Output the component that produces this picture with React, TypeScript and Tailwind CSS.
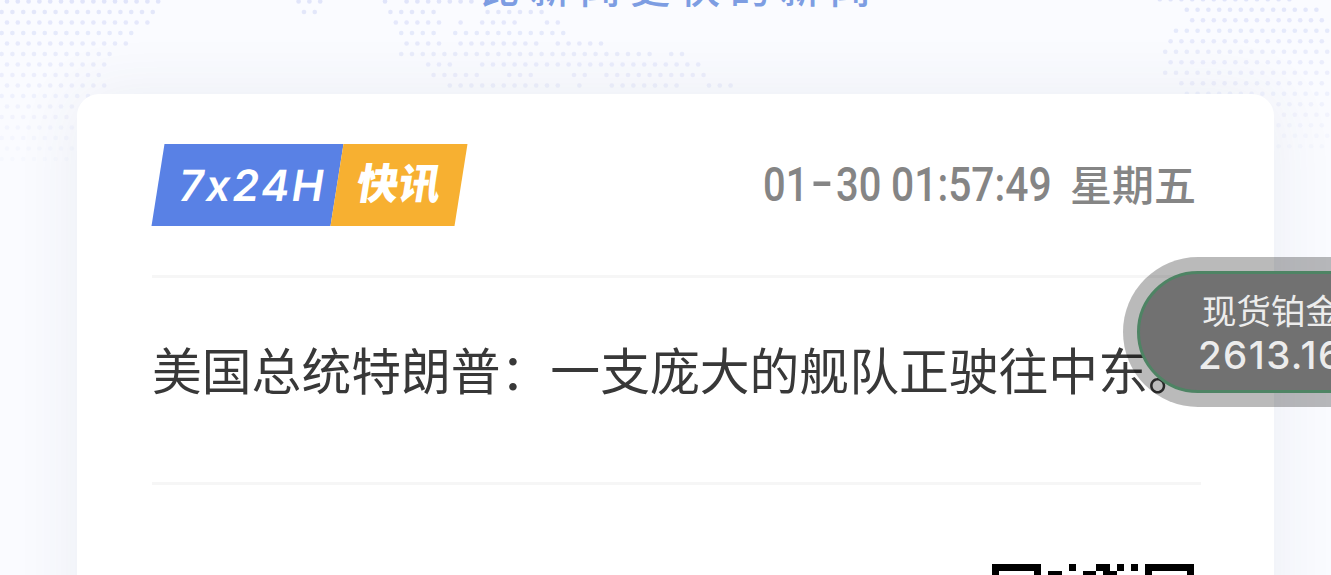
type DotRun = [row: number, from: number, to: number];

const STEP_X = 10.8;
const STEP_Y = 10.5;

// Runs of dots per row, in px
const LEFT_DOTS: DotRun[] = [
  [0, 0, 162], [1, 0, 157], [2, 0, 150], [3, 0, 135], [4, 0, 128], [5, 0, 113],
  [6, 0, 109], [7, 0, 104], [8, 0, 108], [9, 0, 92], [10, 0, 77], [11, 0, 77],
  [12, 0, 77], [13, 0, 77], [14, 0, 77], [15, 0, 77],
  [0, 294, 324], [1, 300, 319],
  [0, 382, 390], [0, 403, 476], [1, 386, 438], [1, 482, 547],
  [2, 392, 444], [2, 456, 464], [2, 478, 519], [2, 543, 562],
  [3, 397, 437], [3, 451, 567], [4, 400, 444], [4, 456, 542], [4, 553, 606],
  [5, 397, 654], [5, 666, 686], [6, 424, 454], [6, 478, 704],
  [7, 429, 482], [7, 504, 536], [7, 568, 590], [7, 602, 708],
  [8, 446, 561], [8, 576, 584], [8, 606, 681], [8, 703, 734],
];

const RIGHT_DOTS: DotRun[] = [
  [0, 1156, 1294], [1, 1182, 1321], [2, 1188, 1331], [3, 1172, 1331],
  [4, 1166, 1331], [5, 1161, 1331], [6, 1166, 1331], [7, 1161, 1331],
  [8, 1177, 1331], [9, 1182, 1331], [10, 1274, 1331], [11, 1274, 1331],
  [12, 1274, 1331], [13, 1274, 1331], [14, 1274, 1331],
];

function buildDots(runs: DotRun[], originX: number, originY: number) {
  return runs.flatMap(([row, from, to]) => {
    const start = originX + (row % 2 ? STEP_X / 2 : 0);
    const dots: { x: number; y: number; opacity: number }[] = [];
    for (let i = Math.ceil((from - start) / STEP_X); start + i * STEP_X <= to; i++) {
      dots.push({
        x: start + i * STEP_X,
        y: originY + row * STEP_Y,
        opacity: Math.max(0.12, 1 - row * 0.06),
      });
    }
    return dots;
  });
}

const DOTS = [...buildDots(LEFT_DOTS, 7, 1.5), ...buildDots(RIGHT_DOTS, 1159.8, -0.7)];

const QR_SIZE = 29;
const QR_ROWS = [
  "11111110000100011010101111111",
  "10000010110001101100001000001",
];

function WorldDots() {
  return (
    <svg className="absolute inset-0 w-full h-full" viewBox="0 0 1331 575" aria-hidden>
      {DOTS.map((dot, i) => (
        <circle key={i} cx={dot.x} cy={dot.y} r="2.3" fill="#e1e5fa" opacity={dot.opacity} />
      ))}
    </svg>
  );
}

function Badge() {
  return (
    <div className="flex h-[82px] ml-[6px] -skew-x-[9deg] text-white">
      <div className="w-[179px] bg-[#5981e5] flex items-center justify-center">
        <span className="font-['Inter',sans-serif] text-[43px] leading-none font-semibold tracking-[2.2px] pt-[1px] pl-[11px] whitespace-nowrap">
          7x24H
        </span>
      </div>
      <div className="w-[124px] bg-[#f7b031] flex items-center justify-center">
        <span className="font-['Noto_Sans_CJK_SC',sans-serif] text-[42px] leading-none font-black pb-[9px] whitespace-nowrap">
          快讯
        </span>
      </div>
    </div>
  );
}

function Timestamp() {
  return (
    <div className="flex items-center h-[82px] text-[#858585] whitespace-nowrap">
      <span className="flex w-[128px] font-['Roboto',sans-serif] text-[48px] leading-none font-medium">
        <span className="w-[48px]">
          <span className="inline-block origin-left scale-x-[0.83]">01</span>
        </span>
        <span className="w-[25px] -mt-[3px]">
          <span className="inline-block origin-left scale-x-[1.35]">-</span>
        </span>
        <span>
          <span className="inline-block origin-left scale-x-[0.83]">30</span>
        </span>
      </span>
      <span className="w-[179px] font-['Roboto',sans-serif] text-[48px] leading-none font-medium">
        <span className="inline-block origin-left scale-x-[0.85]">01:57:49</span>
      </span>
      <span className="font-['Noto_Sans_CJK_SC',sans-serif] text-[42px] leading-none font-medium pb-[5px]">
        星期五
      </span>
    </div>
  );
}

function QrCode() {
  return (
    <svg className="w-[202px] h-[202px]" viewBox={`0 0 ${QR_SIZE} ${QR_SIZE}`} shapeRendering="crispEdges" aria-hidden>
      {QR_ROWS.flatMap((row, y) =>
        [...row].map((cell, x) => (cell === "1" ? <rect key={`${x}-${y}`} x={x} y={y} width="1" height="1" /> : null)),
      )}
    </svg>
  );
}

function PriceBubble() {
  return (
    <div className="absolute left-[1123px] top-[257px] w-[320px] h-[150px] rounded-full bg-black/27 p-[14px]">
      <div className="h-full rounded-full border-[3px] border-[#4e8464] bg-[#717171] pl-[58px] pt-[15px] text-[#ececec] whitespace-nowrap">
        <div className="font-['Noto_Sans_CJK_SC',sans-serif] text-[34.5px] leading-[41px] pl-[4px]">现货铂金</div>
        <div className="font-['Inter',sans-serif] text-[38.5px] leading-[50px] tracking-[1.4px] font-medium">2613.16</div>
      </div>
    </div>
  );
}

export default function App() {
  return (
    <div className="relative w-full h-[575px] overflow-hidden bg-[#fafbff]">
      <WorldDots />
      <div className="relative h-[94px]">
        <h1 className="-mt-[38px] pl-[29px] text-center font-['Noto_Sans_CJK_SC',sans-serif] text-[40px] leading-[48px] tracking-[10px] font-medium text-[#7d9de2] float-left w-full">
          比新闻更快的新闻
        </h1>
      </div>
      <main className="relative mx-[77px] w-[1197px] h-[700px] rounded-[22px] bg-white px-[75px] pt-[50px] shadow-[0_0_66px_rgba(60,66,90,0.075)]">
        <div className="flex justify-between w-[1044px]">
          <Badge />
          <Timestamp />
        </div>
        <div className="mt-[49px] h-[3px] w-[1049px] bg-[#f6f6f6]" />
        <p className="h-[204px] pt-[53px] font-['Noto_Sans_CJK_SC',sans-serif] text-[49.8px] leading-[74px] text-[#383838] whitespace-nowrap">
          美国总统特朗普：一支庞大的舰队正驶往中东。
        </p>
        <div className="h-[3px] w-[1049px] bg-[#f6f6f6]" />
        <div className="flex justify-end pt-[79px] w-[1042px]">
          <QrCode />
        </div>
      </main>
      <PriceBubble />
    </div>
  );
}
